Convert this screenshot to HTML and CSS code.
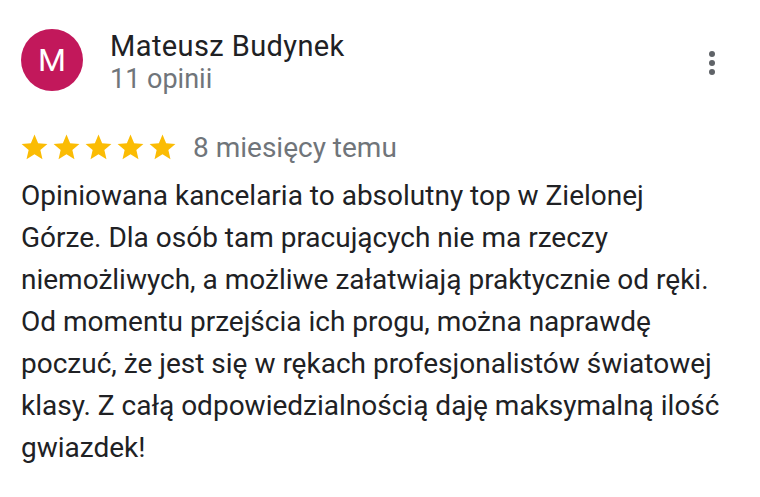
FILE: index.html
```html
<!DOCTYPE html>
<html>
<head>
    <title>Opinia</title>
    <meta name="viewport" content="width=device-width, initial-scale=1.0">
    <link rel="stylesheet" href="styles.css">
</head>
<body>
    <div class="review">
        <div class="review-head">
            <div class="avatar">M</div>
            <div class="author">
                <div class="author-name">Mateusz Budynek</div>
                <div class="author-meta">11 opinii</div>
            </div>
            <div class="menu">
                <span></span><span></span><span></span>
            </div>
        </div>

        <div class="rating">
            <div class="stars">
                <svg viewBox="0 0 24 24"><path d="M12 17.27L18.18 21l-1.64-7.03L22 9.24l-7.19-.61L12 2 9.19 8.63 2 9.24l5.46 4.73L5.82 21z"/></svg>
                <svg viewBox="0 0 24 24"><path d="M12 17.27L18.18 21l-1.64-7.03L22 9.24l-7.19-.61L12 2 9.19 8.63 2 9.24l5.46 4.73L5.82 21z"/></svg>
                <svg viewBox="0 0 24 24"><path d="M12 17.27L18.18 21l-1.64-7.03L22 9.24l-7.19-.61L12 2 9.19 8.63 2 9.24l5.46 4.73L5.82 21z"/></svg>
                <svg viewBox="0 0 24 24"><path d="M12 17.27L18.18 21l-1.64-7.03L22 9.24l-7.19-.61L12 2 9.19 8.63 2 9.24l5.46 4.73L5.82 21z"/></svg>
                <svg viewBox="0 0 24 24"><path d="M12 17.27L18.18 21l-1.64-7.03L22 9.24l-7.19-.61L12 2 9.19 8.63 2 9.24l5.46 4.73L5.82 21z"/></svg>
            </div>
            <span class="date">8 miesięcy temu</span>
        </div>

        <p class="review-text">Opiniowana kancelaria to absolutny top w Zielonej Górze. Dla osób tam pracujących nie ma rzeczy niemożliwych, a możliwe załatwiają praktycznie od ręki. Od momentu przejścia ich progu, można naprawdę poczuć, że jest się w rękach profesjonalistów światowej klasy. Z całą odpowiedzialnością daję maksymalną ilość gwiazdek!</p>
    </div>
</body>
</html>
```

FILE: styles.css
```css
body {
    margin: 0;
    background-color: #fff;
    font-family: Roboto, Arial, sans-serif;
}

.review {
    padding: 29px 22px 0 21px;
}

.review-head {
    display: flex;
    align-items: flex-start;
}

.avatar {
    width: 62px;
    height: 62px;
    border-radius: 50%;
    background-color: #c2185b;
    color: #fff;
    font-size: 32px;
    display: flex;
    align-items: center;
    justify-content: center;
    flex-shrink: 0;
}

.author {
    margin-left: 27px;
    flex-grow: 1;
}

.author-name {
    font-size: 29px;
    line-height: 34px;
    letter-spacing: 0.4px;
    color: #202124;
}

.author-meta {
    font-size: 27px;
    line-height: 32px;
    color: #70757a;
}

.menu {
    display: flex;
    flex-direction: column;
    gap: 3px;
    margin: 22px 23px 0 0;
}

.menu span {
    width: 6px;
    height: 6px;
    border-radius: 50%;
    background-color: #5f6368;
}

.rating {
    display: flex;
    align-items: center;
    height: 34px;
    margin-top: 35px;
}

.stars {
    display: flex;
    gap: 1px;
    margin-left: -2px;
}

.stars svg {
    width: 31px;
    height: 31px;
    fill: #fbbc04;
}

.date {
    margin-left: 15px;
    font-size: 28px;
    color: #70757a;
}

.review-text {
    margin: 11px 0 0;
    font-size: 28px;
    line-height: 42px;
    color: #202124;
    max-width: 700px;
}
```
